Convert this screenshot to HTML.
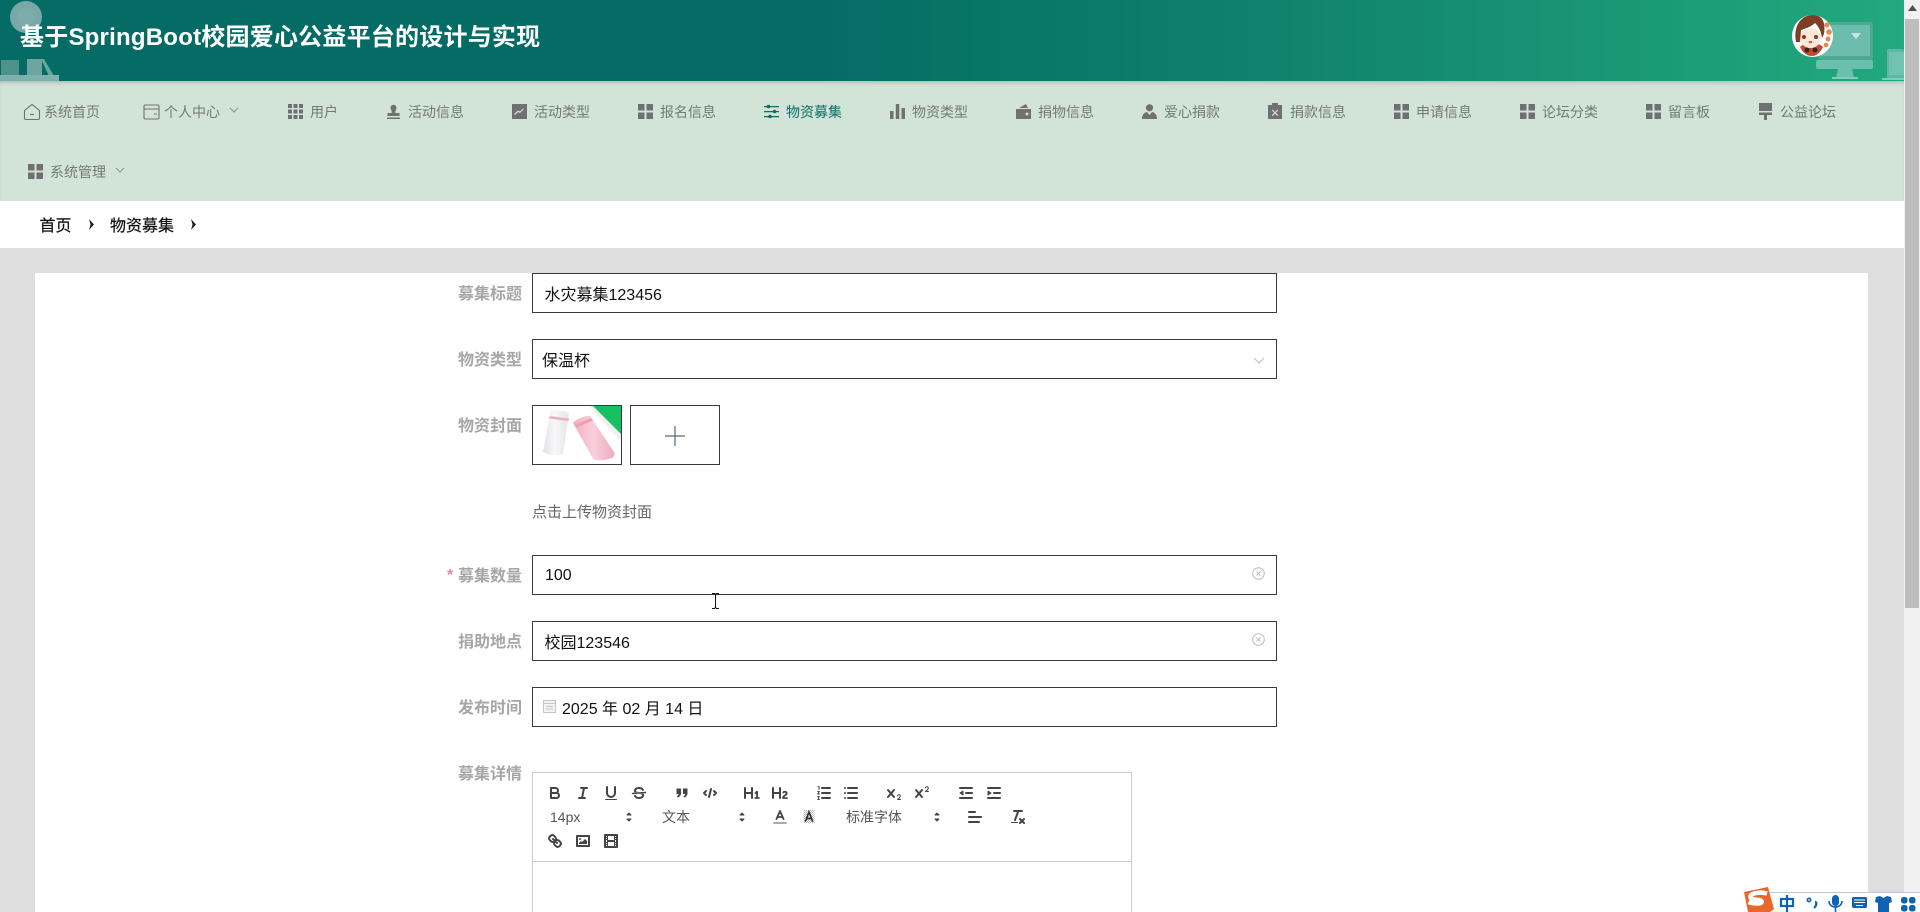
<!DOCTYPE html>
<html lang="zh-CN">
<head>
<meta charset="utf-8">
<title>基于SpringBoot校园爱心公益平台的设计与实现</title>
<style>
html,body{margin:0;padding:0;width:1920px;height:912px;overflow:hidden;background:#dedede}
body{position:relative;font-family:"Liberation Sans","Noto Sans CJK SC",sans-serif;filter:blur(.3px)}
.a{position:absolute;white-space:nowrap}
#hd{left:0;top:0;width:1904px;height:81px;background:linear-gradient(90deg,#056c65 0,#056c65 43%,#0f806c 65%,#22a97d 100%);overflow:hidden}
#title{left:20px;top:20px;font-size:24px;line-height:36px;font-weight:700;color:#fff;letter-spacing:.22px}
#nav{left:0;top:81px;width:1904px;height:120px;background:#d2e3d8;box-shadow:inset 0 4px 4px -3px rgba(70,90,80,.35)}
.n{font-size:14px;line-height:20px;color:#737a76;height:20px}
.n.on{color:#0b6e66}
.ni{width:16px;height:16px;fill:#707070}
.ni.on{fill:#0b6e66}
#bc{left:0;top:201px;width:1904px;height:47px;background:#fff}
.bt{font-size:16px;line-height:24px;color:#111;-webkit-text-stroke:.2px #111}
#card{left:35px;top:273px;width:1833px;height:639px;background:#fff}
.lb{width:120px;left:402px;text-align:right;font-size:16px;font-weight:700;line-height:24px;color:#a6a6a6}
.ip{left:532px;width:743px;height:38px;border:1px solid #3a3a3a;background:#fff}
.tx{font-size:16px;line-height:24px;color:#111}
#ed{left:532px;top:772px;width:598px;height:140px;border:1px solid #ccc;border-bottom:0;background:#fff}
#edl{left:532px;top:861px;width:600px;height:1px;background:#ccc}
.q{width:18px;height:18px;fill:none;stroke:#444;stroke-width:2;stroke-linecap:round;stroke-linejoin:round}
.f{fill:#444;stroke:none}
.t{font-size:14px;line-height:20px;color:#555}
#sb{left:1904px;top:0;width:16px;height:912px;background:#f1f1f1}
#th{left:1905px;top:19px;width:14px;height:589px;background:#bdbdbd}
</style>
</head>
<body>
<div class="a" id="hd">
  <svg class="a" style="left:0;top:0" width="70" height="81" viewBox="0 0 70 81">
    <circle cx="26" cy="17" r="16" fill="#78a9a7"/>
    <circle cx="26" cy="17" r="9" fill="#7dadab"/>
    <rect x="1" y="60" width="18" height="16" fill="#4f928c"/>
    <rect x="27" y="59" width="15" height="17" fill="#6ba59e"/>
    <path d="M44 59l10 17h-5l-8-17z" fill="#6ba59e"/>
    <rect x="0" y="75" width="59" height="6" fill="#7db1ab"/>
  </svg>
  <svg class="a" style="left:1810px;top:0" width="94" height="81" viewBox="0 0 94 81">
    <rect x="8" y="22" width="55" height="38" rx="3" fill="#4fa893"/>
    <rect x="11" y="25" width="49" height="31" fill="#6cbdad"/>
    <path d="M41 33h10l-5 6z" fill="#c4e8e0"/>
    <rect x="6" y="60" width="57" height="9" rx="2" fill="#6dbfad"/>
    <path d="M28 69h14l2 9H26z" fill="#6dbfad"/>
    <rect x="22" y="77" width="26" height="2" fill="#7fcaba"/>
    <rect x="77" y="49" width="17" height="30" rx="2" fill="#5fb8a5"/>
    <rect x="79" y="52" width="15" height="23" fill="#72c2b1"/>
    <rect x="72" y="78" width="22" height="2" fill="#7fcaba"/>
  </svg>
  <svg class="a" style="left:1791px;top:14px" width="44" height="44" viewBox="0 0 44 44">
    <ellipse cx="21.500" cy="22" rx="20.500" ry="21" fill="#fff"/>
    <path d="M9 33c3-3 6-4 11-4s9 1 12 4c-3 6-7 9-11 9-5 0-9-3-12-9z" fill="#c9482b"/>
    <circle cx="16" cy="36" r="2.500" fill="#2e2a28"/><circle cx="24" cy="36" r="2.500" fill="#2e2a28"/>
    <ellipse cx="19.500" cy="24" rx="10.500" ry="10" fill="#fde7d8"/>
    <path d="M5 28C2 12 10 1 22 1c9 0 13 7 11 19l-2 4c-1-8-4-12-7-15-4 4-11 6-14 7l-1 12z" fill="#7e3d24"/>
    <circle cx="13" cy="23" r="2" fill="#75401f"/><circle cx="25" cy="23" r="2" fill="#75401f"/>
    <ellipse cx="19.500" cy="28" rx="1.800" ry="1.300" fill="#e65b3b"/>
    <g fill="#e8864c"><circle cx="36" cy="11" r="2.500"/><circle cx="38" cy="18" r="2.800"/><circle cx="37" cy="25" r="2.500"/><circle cx="35" cy="31" r="2.300"/></g>
  </svg>
  <div class="a" id="title">基于SpringBoot校园爱心公益平台的设计与实现</div>
</div>

<div class="a" id="nav"></div>

<!-- nav icons -->
<svg class="a" style="left:23px;top:103px" width="18" height="18" viewBox="0 0 18 18" fill="none" stroke="#707070" stroke-width="1.100"><path d="M1.500 7.500L9 1.500l7.500 6V15a1.500 1.500 0 0 1-1.500 1.500H3A1.500 1.500 0 0 1 1.500 15z"/><path d="M7 11.500h4"/></svg>
<div class="a n" style="left:44px;top:102px">系统首页</div>
<svg class="a" style="left:143px;top:104px" width="17" height="16" viewBox="0 0 17 16" fill="none" stroke="#707070" stroke-width="1.100"><rect x="1" y="1" width="15" height="14" rx="1.500"/><path d="M1 5h15M11 10h3"/></svg>
<div class="a n" style="left:164px;top:102px">个人中心</div>
<svg class="a" style="left:229px;top:107px" width="10" height="6" viewBox="0 0 10 6" fill="none" stroke="#8a938e" stroke-width="1"><path d="M1 1l4 4 4-4"/></svg>

<svg class="a ni" style="left:288px;top:104px;width:15px;height:15px" viewBox="0 0 15 15"><path d="M0 0h4v4H0zM5.500 0h4v4h-4zM11 0h4v4h-4zM0 5.500h4v4H0zM5.500 5.500h4v4h-4zM11 5.500h4v4h-4zM0 11h4v4H0zM5.500 11h4v4h-4zM11 11h4v4h-4z"/></svg>
<div class="a n" style="left:310px;top:102px">用户</div>

<svg class="a ni" style="left:386px;top:104px;width:15px;height:15px" viewBox="0 0 15 15"><path d="M4.500 3.800a3 3 0 0 1 6 0c0 1.700-1.200 2.700-1.200 4.200v1h4.200v3H1.500V9h4.200V8c0-1.500-1.200-2.500-1.200-4.200zM1 13.500h13V15H1z"/></svg>
<div class="a n" style="left:408px;top:102px">活动信息</div>

<svg class="a ni" style="left:512px;top:104px;width:15px;height:15px" viewBox="0 0 15 15"><path fill-rule="evenodd" d="M0 0h15v15H0zM3 11l3-3 2 1 4-4-1-.5-3 3-2-1-4 3.500z"/></svg>
<div class="a n" style="left:534px;top:102px">活动类型</div>

<svg class="a ni" style="left:638px;top:104px;width:15px;height:15px" viewBox="0 0 15 15"><path d="M0 0h6.500v6.500H0zM8.500 0H15v6.500H8.500zM0 8.500h6.500V15H0zM8.500 8.500H15V15H8.500z"/></svg>
<div class="a n" style="left:660px;top:102px">报名信息</div>

<svg class="a" style="left:764px;top:104px" width="15" height="15" viewBox="0 0 15 15" fill="#0b6e66"><path d="M0 2h15v1.200H0zM0 7h15v1.200H0zM0 12h15v1.200H0z"/><circle cx="4.500" cy="2.500" r="1.800"/><circle cx="10.500" cy="7.500" r="1.800"/><circle cx="6" cy="12.500" r="1.800"/></svg>
<div class="a n on" style="left:786px;top:102px">物资募集</div>

<svg class="a ni" style="left:890px;top:104px;width:15px;height:15px" viewBox="0 0 15 15"><path d="M0 7h3.500v8H0zM5.800 0h3.500v15H5.800zM11.500 4H15v11h-3.500z"/></svg>
<div class="a n" style="left:912px;top:102px">物资类型</div>

<svg class="a ni" style="left:1016px;top:104px;width:15px;height:15px" viewBox="0 0 15 15"><path fill-rule="evenodd" d="M0 5h15v10H0zM11 8.500a1.500 1.500 0 1 0 .001 0zM3 4l7-4 2 4z"/></svg>
<div class="a n" style="left:1038px;top:102px">捐物信息</div>

<svg class="a ni" style="left:1142px;top:104px;width:15px;height:15px" viewBox="0 0 15 15"><circle cx="7.500" cy="3.800" r="3.600"/><path d="M0 15c0-4 2-6.500 5-7l2.500 3 2.500-3c3 .5 5 3 5 7z"/></svg>
<div class="a n" style="left:1164px;top:102px">爱心捐款</div>

<svg class="a ni" style="left:1268px;top:103px;width:14px;height:16px" viewBox="0 0 14 16"><path fill-rule="evenodd" d="M0 2h4V0h6v2h4v14H0zM4.500 6.500L7 9l2.500-2.500.8.800L7.800 9.800l2.500 2.500-.8.800L7 10.600l-2.500 2.500-.8-.8 2.500-2.500-2.500-2.500z"/></svg>
<div class="a n" style="left:1290px;top:102px">捐款信息</div>

<svg class="a ni" style="left:1394px;top:104px;width:15px;height:15px" viewBox="0 0 15 15"><path d="M0 0h6.500v6.500H0zM8.500 0H15v6.500H8.500zM0 8.500h6.500V15H0zM8.500 8.500H15V15H8.500z"/></svg>
<div class="a n" style="left:1416px;top:102px">申请信息</div>

<svg class="a ni" style="left:1520px;top:104px;width:15px;height:15px" viewBox="0 0 15 15"><path d="M0 0h6.500v6.500H0zM8.500 0H15v6.500H8.500zM0 8.500h6.500V15H0zM8.500 8.500H15V15H8.500z"/></svg>
<div class="a n" style="left:1542px;top:102px">论坛分类</div>

<svg class="a ni" style="left:1646px;top:104px;width:15px;height:15px" viewBox="0 0 15 15"><path d="M0 0h6.500v6.500H0zM8.500 0H15v6.500H8.500zM0 8.500h6.500V15H0zM8.500 8.500H15V15H8.500z"/></svg>
<div class="a n" style="left:1668px;top:102px">留言板</div>

<svg class="a ni" style="left:1759px;top:103px;width:13px;height:17px" viewBox="0 0 13 17"><path d="M0 0h13v8H0zM0 9.500h13V12H8v5H5v-5H0z"/></svg>
<div class="a n" style="left:1780px;top:102px">公益论坛</div>

<svg class="a ni" style="left:28px;top:164px;width:15px;height:15px" viewBox="0 0 15 15"><path d="M0 0h6.500v6.500H0zM8.500 0H15v6.500H8.500zM0 8.500h6.500V15H0zM8.500 8.500H15V15H8.500z"/></svg>
<div class="a n" style="left:50px;top:162px">系统管理</div>
<svg class="a" style="left:115px;top:167px" width="10" height="6" viewBox="0 0 10 6" fill="none" stroke="#8a938e" stroke-width="1"><path d="M1 1l4 4 4-4"/></svg>

<!-- breadcrumb -->
<div class="a" id="bc"></div>
<div class="a bt" style="left:39.500px;top:215px">首页</div>
<svg class="a" style="left:88px;top:219px" width="7" height="11" viewBox="0 0 7 11" fill="#222"><path d="M1 0l5 5.500L1 11l1.500-5.500z"/></svg>
<div class="a bt" style="left:110px;top:215px">物资募集</div>
<svg class="a" style="left:190px;top:219px" width="7" height="11" viewBox="0 0 7 11" fill="#222"><path d="M1 0l5 5.500L1 11l1.500-5.500z"/></svg>

<!-- card -->
<div class="a" id="card"></div>

<div class="a lb" style="top:283px">募集标题</div>
<div class="a ip" style="top:273px"></div>
<div class="a tx" style="left:544.500px;top:284px">水灾募集123456</div>

<div class="a lb" style="top:349px">物资类型</div>
<div class="a ip" style="top:339px"></div>
<div class="a tx" style="left:542px;top:350px">保温杯</div>
<svg class="a" style="left:1253px;top:357px" width="12" height="7" viewBox="0 0 12 7" fill="none" stroke="#bdbdbd" stroke-width="1"><path d="M1 1l5 5 5-5"/></svg>

<div class="a lb" style="top:415px">物资封面</div>
<svg class="a" style="left:532px;top:405px" width="90" height="60" viewBox="0 0 90 60">
  <defs>
    <linearGradient id="wb" x1="0" y1="0" x2="1" y2="0"><stop offset="0" stop-color="#e2e2e6"/><stop offset=".45" stop-color="#f8f8fa"/><stop offset="1" stop-color="#e4e4e8"/></linearGradient>
    <linearGradient id="pb" x1="0" y1="0" x2="1" y2="0"><stop offset="0" stop-color="#f2afc2"/><stop offset=".5" stop-color="#f9cfdb"/><stop offset="1" stop-color="#f0aabf"/></linearGradient>
  </defs>
  <rect width="90" height="60" fill="#fff"/>
  <path d="M56 0h34v38z" fill="#f1f1ef"/>
  <path d="M61 1h28v28z" fill="#17c060"/>
  <path d="M19 5.500c6-1 13 0 18 2.500l-6 41c-6 2-15 1-20-2z" fill="url(#wb)"/>
  <path d="M17.500 11l19.500 2.500-.4 2.500-19.500-2.500z" fill="#efb0bd"/>
  <path d="M41 18c2-3 12-8 17-7l4 6 20 30c1 3 0 5-2 6-6 2-12 3-17 2-2-1-3-3-4-5z" fill="url(#pb)"/>
  <path d="M42.500 20l17-7 1.500 2.500-17 7z" fill="#eb9fb4"/>
  <rect x=".5" y=".5" width="89" height="59" fill="none" stroke="#3a3a3a"/>
</svg>
<div class="a" style="left:630px;top:405px;width:88px;height:58px;border:1px solid #3a3a3a;background:#fff"></div>
<svg class="a" style="left:665px;top:426px" width="20" height="20" viewBox="0 0 20 20"><path d="M0 10h20" stroke="#666" stroke-width="1.300"/><path d="M10 0v20" stroke="#5d6f88" stroke-width="1.300"/></svg>
<div class="a" style="left:532px;top:502px;font-size:15px;line-height:22px;color:#666">点击上传物资封面</div>

<div class="a" style="left:447px;top:564px;font-size:16px;line-height:24px;font-weight:700;color:#e58a8a">*</div>
<div class="a lb" style="top:565px">募集数量</div>
<div class="a ip" style="top:555px"></div>
<div class="a tx" style="left:545px;top:564px">100</div>
<svg class="a" style="left:1252px;top:567px" width="13" height="13" viewBox="0 0 13 13" fill="none" stroke="#bdbdbd" stroke-width="1"><circle cx="6.500" cy="6.500" r="5.800"/><path d="M4.500 4.500l4 4M8.500 4.500l-4 4"/></svg>

<div class="a lb" style="top:631px">捐助地点</div>
<div class="a ip" style="top:621px"></div>
<div class="a tx" style="left:544.500px;top:632px">校园123546</div>
<svg class="a" style="left:1252px;top:633px" width="13" height="13" viewBox="0 0 13 13" fill="none" stroke="#bdbdbd" stroke-width="1"><circle cx="6.500" cy="6.500" r="5.800"/><path d="M4.500 4.500l4 4M8.500 4.500l-4 4"/></svg>

<div class="a lb" style="top:697px">发布时间</div>
<div class="a ip" style="top:687px"></div>
<svg class="a" style="left:543px;top:700px" width="13" height="13" viewBox="0 0 13 13" fill="none" stroke="#c4c8c4" stroke-width="1"><rect x=".5" y=".5" width="12" height="12" fill="#f2f4f2"/><path d="M.5 3.500h12M3 6.500h7M3 9h7"/></svg>
<div class="a tx" style="left:562px;top:698px">2025 年 02 月 14 日</div>

<div class="a lb" style="top:763px">募集详情</div>
<div class="a" id="ed"></div>
<div class="a" id="edl"></div>

<!-- toolbar row 1 -->
<svg class="a q" style="left:546px;top:784px" viewBox="0 0 18 18"><path d="M5,4H9.5A2.5,2.5,0,0,1,12,6.500v0A2.500,2.500,0,0,1,9.500,9H5A0,0,0,0,1,5,9V4A0,0,0,0,1,5,4Z"/><path d="M5,9h5.500A2.500,2.500,0,0,1,13,11.500v0A2.500,2.500,0,0,1,10.500,14H5a0,0,0,0,1,0,0V9A0,0,0,0,1,5,9Z"/></svg>
<svg class="a q" style="left:574px;top:784px" viewBox="0 0 18 18"><path d="M7 4h6M5 14h6M8 14l2-10"/></svg>
<svg class="a q" style="left:602px;top:784px" viewBox="0 0 18 18"><path d="M5,3V9a4.012,4.012,0,0,0,4,4H9a4.012,4.012,0,0,0,4-4V3"/><rect class="f" height="1" rx=".5" ry=".5" width="12" x="3" y="15"/></svg>
<svg class="a q" style="left:630px;top:784px" viewBox="0 0 18 18"><path d="M15.500 8.500L2.500 9.500" stroke-width="1.500"/><path class="f" d="M9.007,8C6.542,7.791,6,7.519,6,6.500,6,5.792,7.283,5,9,5c1.571,0,2.765.679,2.969,1.309a1,1,0,0,0,1.900-.617C13.356,4.106,11.354,3,9,3,6.200,3,4,4.538,4,6.500a3.200,3.200,0,0,0,.5,1.843Z"/><path class="f" d="M8.984,10C11.457,10.208,12,10.479,12,11.500c0,.708-1.283,1.500-3,1.500-1.571,0-2.765-.679-2.969-1.309a1,1,0,1,0-1.900.617C4.644,13.894,6.646,15,9,15c2.800,0,5-1.538,5-3.500a3.200,3.200,0,0,0-.5-1.843Z"/></svg>
<svg class="a" style="left:673px;top:784px" width="18" height="18" viewBox="0 0 18 18" fill="#444"><path d="M3.500 4.500h4.500v4.500c0 2.500-1.500 4-3.500 4.500l-.6-1.300c1.200-.5 1.700-1.300 1.800-2.200H3.500zM10 4.500h4.500v4.500c0 2.500-1.500 4-3.500 4.500l-.6-1.300c1.200-.5 1.700-1.300 1.800-2.200H10z"/></svg>
<svg class="a q" style="left:701px;top:784px" viewBox="0 0 18 18"><path d="M5 7L3 9l2 2M13 7l2 2-2 2M10 5L8 13"/></svg>
<svg class="a q" style="left:743px;top:784px" viewBox="0 0 18 18"><path class="f" d="M10,4V14a1,1,0,0,1-2,0V10H3v4a1,1,0,0,1-2,0V4A1,1,0,0,1,3,4V8H8V4a1,1,0,0,1,2,0Zm6.068,9.209H14.990V7.599a.541.541,0,0,0-.605-.605h-.627a1.011,1.011,0,0,0-.748.297L11.645,8.566a.544.544,0,0,0-.022.858l.286.308a.539.539,0,0,0,.847.033l.099-.088a1.214,1.214,0,0,0,.242-.353h.022s-.011.309-.011.605V13.209H12.041a.541.541,0,0,0-.605.605v.44a.541.541,0,0,0,.605.605h4.027a.541.541,0,0,0,.605-.605v-.44A.541.541,0,0,0,16.068,13.209Z"/></svg>
<svg class="a q" style="left:771px;top:784px" viewBox="0 0 18 18"><path class="f" d="M16.740,13.814v.44a.541.541,0,0,1-.605.605H11.855a.584.584,0,0,1-.649-.605V14.013c0-2.905,3.399-3.422,3.399-4.555a.777.777,0,0,0-.847-.781,1.177,1.177,0,0,0-.836.385c-.275.264-.561.374-.858.132l-.429-.341c-.308-.242-.385-.518-.154-.814a2.972,2.972,0,0,1,2.454-1.177,2.454,2.454,0,0,1,2.684,2.409c0,2.453-3.179,2.927-3.278,3.938h2.794A.541.541,0,0,1,16.740,13.814ZM9,3A1,1,0,0,0,8,4V8H3V4A1,1,0,0,0,1,4V14a1,1,0,0,0,2,0V10H8v4a1,1,0,0,0,2,0V4A1,1,0,0,0,9,3Z"/></svg>
<svg class="a q" style="left:815px;top:784px" viewBox="0 0 18 18"><path d="M7 4h8M7 9h8M7 14h8"/><path d="M3 2.500h1v3M2.700 7.500H4.300L2.700 10H4.500M2.700 12.500H4.300L3.300 14l1 1.500H2.700" stroke-width="1"/></svg>
<svg class="a q" style="left:842px;top:784px" viewBox="0 0 18 18"><path d="M6 4h9M6 9h9M6 14h9M3 4h.01M3 9h.01M3 14h.01"/></svg>
<svg class="a q" style="left:885px;top:784px" viewBox="0 0 18 18"><path class="f" d="M15.500,15H13.861a3.858,3.858,0,0,0,1.914-2.975,1.800,1.800,0,0,0-1.600-1.751A1.921,1.921,0,0,0,12.021,11.700a.5.5,0,1,0,.957.291h0a.914.914,0,0,1,1.053-.725.810.810,0,0,1,.744.762c0,1.076-1.170,1.870-1.940,2.431A1.456,1.456,0,0,0,12,15.500a.5.5,0,0,0,.5.5h3A.5.5,0,0,0,15.500,15Z"/><path class="f" d="M9.650,5.241a1,1,0,0,0-1.409.108L6,7.964,3.759,5.349A1,1,0,0,0,2.241,6.651L4.684,9.500,2.241,12.350A1,1,0,0,0,3.759,13.650L6,11.036l2.241,2.614a1,1,0,0,0,1.518-1.300L7.316,9.500,9.759,6.651A1,1,0,0,0,9.650,5.241Z"/></svg>
<svg class="a q" style="left:913px;top:784px" viewBox="0 0 18 18"><path class="f" d="M15.500,7H13.861a4.015,4.015,0,0,0,1.914-2.975,1.800,1.800,0,0,0-1.600-1.751A1.922,1.922,0,0,0,12.021,3.700a.5.5,0,1,0,.957.291.917.917,0,0,1,1.053-.725.810.810,0,0,1,.744.762c0,1.077-1.164,1.925-1.934,2.486A1.423,1.423,0,0,0,12,7.500a.5.5,0,0,0,.5.5h3A.5.5,0,0,0,15.500,7Z"/><path class="f" d="M9.650,5.241a1,1,0,0,0-1.409.108L6,7.964,3.759,5.349A1,1,0,0,0,2.241,6.651L4.684,9.500,2.241,12.350A1,1,0,0,0,3.759,13.650L6,11.036l2.241,2.614a1,1,0,0,0,1.518-1.300L7.316,9.500,9.759,6.651A1,1,0,0,0,9.650,5.241Z"/></svg>
<svg class="a q" style="left:957px;top:784px" viewBox="0 0 18 18"><path d="M3 14h12M3 4h12M9 9h6"/><path class="f" d="M6 7L3 9l3 2z"/><path d="M6 7L3 9l3 2z" stroke-width="1"/></svg>
<svg class="a q" style="left:985px;top:784px" viewBox="0 0 18 18"><path d="M3 14h12M3 4h12M9 9h6"/><path class="f" d="M3 7l3 2-3 2z"/><path d="M3 7l3 2-3 2z" stroke-width="1"/></svg>

<!-- toolbar row 2 -->
<div class="a t" style="left:550px;top:807px">14px</div>
<svg class="a q" style="left:620px;top:808px" viewBox="0 0 18 18"><path class="f" d="M7 11l2 2 2-2zM7 7l2-2 2 2z" style="stroke:#444;stroke-width:1"/></svg>
<div class="a t" style="left:662px;top:807px">文本</div>
<svg class="a q" style="left:733px;top:808px" viewBox="0 0 18 18"><path class="f" d="M7 11l2 2 2-2zM7 7l2-2 2 2z" style="stroke:#444;stroke-width:1"/></svg>
<svg class="a q" style="left:771px;top:808px" viewBox="0 0 18 18"><path d="M3 15h12" stroke="#aaa"/><path d="M5.500 11L9 3l3.500 8M11.630 9H6.380" stroke-width="1.800"/></svg>
<svg class="a" style="left:800px;top:808px" width="18" height="18" viewBox="0 0 18 18"><defs><pattern id="dz" width="2" height="2" patternUnits="userSpaceOnUse"><rect width="1" height="1" fill="#777"/><rect x="1" y="1" width="1" height="1" fill="#999"/></pattern></defs><rect x="3.500" y="2" width="11" height="13" fill="url(#dz)" opacity=".6"/><path d="M5.500 13L9 4l3.500 9M11.630 10.500H6.380" fill="none" stroke="#333" stroke-width="1.700" stroke-linecap="round"/></svg>
<div class="a t" style="left:846px;top:807px">标准字体</div>
<svg class="a q" style="left:928px;top:808px" viewBox="0 0 18 18"><path class="f" d="M7 11l2 2 2-2zM7 7l2-2 2 2z" style="stroke:#444;stroke-width:1"/></svg>
<svg class="a q" style="left:966px;top:808px" viewBox="0 0 18 18"><path d="M3 9h12M3 14h10M3 4h6"/></svg>
<svg class="a q" style="left:1009px;top:808px" viewBox="0 0 18 18"><path d="M5 3h8M6 12L9.350 3M11 11l4 4M15 11l-4 4"/><rect class="f" height="1" rx=".5" ry=".5" width="7" x="2" y="14"/></svg>

<!-- toolbar row 3 -->
<svg class="a q" style="left:546px;top:832px" viewBox="0 0 18 18"><path d="M7 7l4 4"/><path d="M8.900,4.577a3.476,3.476,0,0,1,.36,4.679A3.476,3.476,0,0,1,4.577,8.900C3.185,7.500,2.035,6.400,4.217,4.217S7.500,3.185,8.900,4.577Z"/><path d="M13.423,9.100a3.476,3.476,0,0,0-4.679-.36,3.476,3.476,0,0,0,.36,4.679c1.392,1.392,2.500,2.542,4.679.36S14.815,10.500,13.423,9.100Z"/></svg>
<svg class="a q" style="left:574px;top:832px" viewBox="0 0 18 18"><rect height="10" width="12" x="3" y="4"/><circle class="f" cx="6" cy="7" r="1"/><path class="f" d="M5 12V11l2-2 1 1 3-3 2 2v3z"/></svg>
<svg class="a q" style="left:602px;top:832px" viewBox="0 0 18 18"><rect height="12" width="12" x="3" y="3"/><path class="f" d="M5 3h1v12H5zM12 3h1v12h-1zM5 8h8v2H5zM3 5h3v1H3zM3 7h3v1H3zM3 10h3v1H3zM3 12h3v1H3zM12 5h3v1h-3zM12 7h3v1h-3zM12 10h3v1h-3zM12 12h3v1h-3z"/></svg>

<!-- I-beam cursor -->
<svg class="a" style="left:711px;top:593px" width="9" height="16" viewBox="0 0 9 16" fill="none" stroke="#111" stroke-width="1"><path d="M1 .5h2.500L4.500 1.500 5.500 .5H8M4.500 1.500v13M1 15.500h2.500l1-1 1 1H8"/></svg>

<!-- scrollbar -->
<div class="a" id="sb"></div>
<div class="a" id="th"></div>
<svg class="a" style="left:1908px;top:5px" width="9" height="6" viewBox="0 0 9 6" fill="#505050"><path d="M4.500 0L9 6H0z"/></svg>

<!-- IME bar -->
<div class="a" style="left:1768px;top:892px;width:152px;height:20px;background:#fff;border-top:1px solid #b9c9dc;box-sizing:border-box"></div>
<svg class="a" style="left:1742px;top:886px" width="34" height="26" viewBox="0 0 34 26"><path d="M2 6l24-5 6 22-4 3H6z" fill="#e8672c"/><path d="M25 7.500C19 6 10 6.500 8.500 10c-1 3 4 3.500 8 4 4.500.5 4.500 3.500-1 3.500-3 0-6.500-.5-9-1.500" fill="none" stroke="#fff" stroke-width="4.500"/></svg>
<svg class="a" style="left:1778px;top:893px" width="142" height="19" viewBox="0 0 142 19">
  <g fill="none" stroke="#0f62b4" stroke-width="2.200">
    <rect x="3" y="6" width="12" height="7"/><path d="M9 2v17"/>
    <circle cx="31" cy="7" r="1.700" stroke-width="1.600"/>
  </g>
  <path d="M37 9c2 0 2 3-1 6" fill="none" stroke="#0f62b4" stroke-width="2.200"/>
  <rect x="54" y="2" width="7" height="11" rx="3.500" fill="#0f62b4"/>
  <path d="M51 8c0 8 13 8 13 0M57.500 13v6" fill="none" stroke="#0f62b4" stroke-width="1.600"/>
  <rect x="74" y="4" width="15" height="11" rx="1.500" fill="#0f62b4"/>
  <path d="M76 7h11M76 9.500h11M78 12.500h7" stroke="#fff" stroke-width="1.100"/>
  <path d="M98 4l4-1 3.500 2 3.500-2 4 1 1 5-3 1v9h-11v-9l-3-1z" fill="#0f62b4"/>
  <g fill="#0f62b4"><rect x="123" y="4" width="6.500" height="6.500" rx="2.500"/><rect x="131" y="4" width="6.500" height="6.500" rx="2.500"/><rect x="123" y="12" width="6.500" height="6.500" rx="2.500"/><rect x="131" y="12" width="6.500" height="6.500" rx="2.500"/></g>
</svg>
</body>
</html>
